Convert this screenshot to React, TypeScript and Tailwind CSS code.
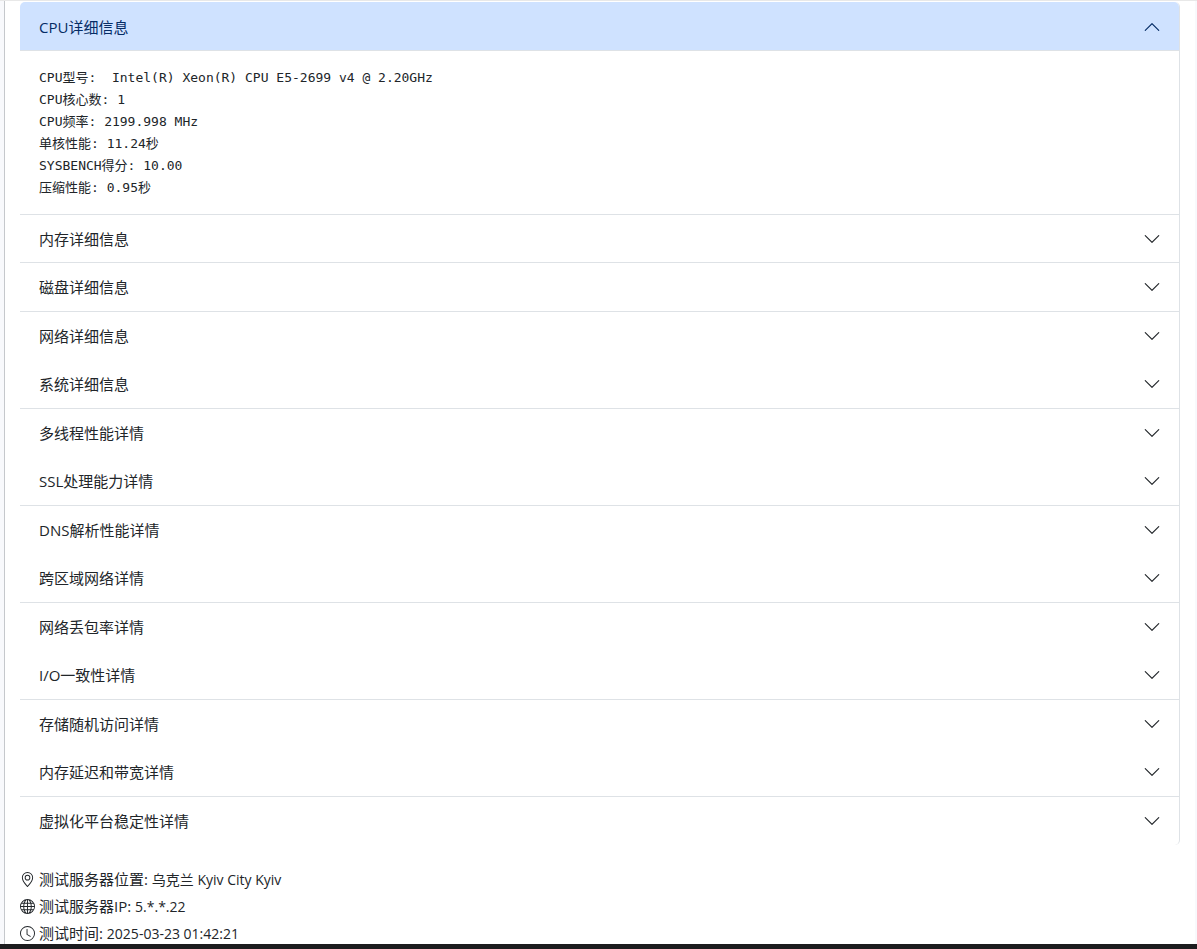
import { useState } from 'react';
import { BsChevronDown, BsClock, BsGeoAlt, BsGlobe } from 'react-icons/bs';

type Section = { title: string; divider: boolean };

const cpuDetails = [
  'CPU型号:  Intel(R) Xeon(R) CPU E5-2699 v4 @ 2.20GHz',
  'CPU核心数: 1',
  'CPU频率: 2199.998 MHz',
  '单核性能: 11.24秒',
  'SYSBENCH得分: 10.00',
  '压缩性能: 0.95秒',
];

const sections: Section[] = [
  { title: '内存详细信息', divider: true },
  { title: '磁盘详细信息', divider: true },
  { title: '网络详细信息', divider: false },
  { title: '系统详细信息', divider: true },
  { title: '多线程性能详情', divider: false },
  { title: 'SSL处理能力详情', divider: true },
  { title: 'DNS解析性能详情', divider: false },
  { title: '跨区域网络详情', divider: true },
  { title: '网络丢包率详情', divider: false },
  { title: 'I/O一致性详情', divider: true },
  { title: '存储随机访问详情', divider: false },
  { title: '内存延迟和带宽详情', divider: true },
  { title: '虚拟化平台稳定性详情', divider: false },
];

const facts = [
  { icon: BsGeoAlt, label: '测试服务器位置:', value: '乌克兰 Kyiv City Kyiv' },
  { icon: BsGlobe, label: '测试服务器IP:', value: '5.*.*.22' },
  { icon: BsClock, label: '测试时间:', value: '2025-03-23 01:42:21' },
];

function CpuPanel() {
  const [open, setOpen] = useState(true);
  return (
    <section>
      <h2>
        <button
          type="button"
          aria-expanded={open}
          aria-controls="cpu-panel"
          onClick={() => setOpen(!open)}
          className="flex h-[49px] w-full items-center justify-between rounded-t-[5px] border-b border-[#dee2e6] bg-[#cfe2ff] pt-px pr-[18px] pl-[19px] text-left text-[#052c65]"
        >
          <span>CPU详细信息</span>
          <BsChevronDown className={open ? 'size-[18px] rotate-180' : 'size-[18px]'} />
        </button>
      </h2>
      {open && (
        <div
          id="cpu-panel"
          className="overflow-x-auto border-b border-[#dee2e6] pt-4 pr-[18px] pb-[15px] pl-[19px] font-['DejaVu_Sans_Mono','Noto_Sans_CJK_SC',monospace] text-[13px] leading-[22px] font-normal"
        >
          {cpuDetails.map((line) => (
            <p key={line} className="h-[22px] whitespace-pre">
              {line}
            </p>
          ))}
        </div>
      )}
    </section>
  );
}

function SectionRow({ section }: { section: Section }) {
  return (
    <h2
      className={
        section.divider
          ? 'h-12 border-b border-[#dee2e6] odd:h-[49px]'
          : 'h-12 border-b border-transparent odd:h-[49px]'
      }
    >
      <button
        type="button"
        aria-expanded={false}
        className="flex h-full w-full items-center justify-between pr-[18px] pl-[19px] text-left"
      >
        <span>{section.title}</span>
        <BsChevronDown className="size-[18px]" />
      </button>
    </h2>
  );
}

export default function App() {
  return (
    <div className="flex min-h-screen flex-col border-t border-[#e8e8e8] bg-[#f8f9fc] font-['Open_Sans','Noto_Sans_CJK_SC',sans-serif] text-[15px] leading-5 text-[#212529]">
      <main className="mr-[2px] ml-1 flex-1 border-l border-[#c5c8cc] bg-white pt-px pr-[15px] pl-[15px]">
        <div className="rounded-[5px] border-r border-[#dee2e6]">
          <CpuPanel />
          {sections.map((section) => (
            <SectionRow key={section.title} section={section} />
          ))}
        </div>
        <ul className="mt-6 flex flex-col gap-[7px]">
          {facts.map(({ icon: Icon, label, value }) => (
            <li key={label} className="flex h-5 items-center gap-1">
              <Icon className="size-[15px] shrink-0" />
              <p>
                {label} <span className="text-sm leading-5">{value}</span>
              </p>
            </li>
          ))}
        </ul>
      </main>
      <footer className="h-[5px] bg-[#1c1c1e]" />
    </div>
  );
}
